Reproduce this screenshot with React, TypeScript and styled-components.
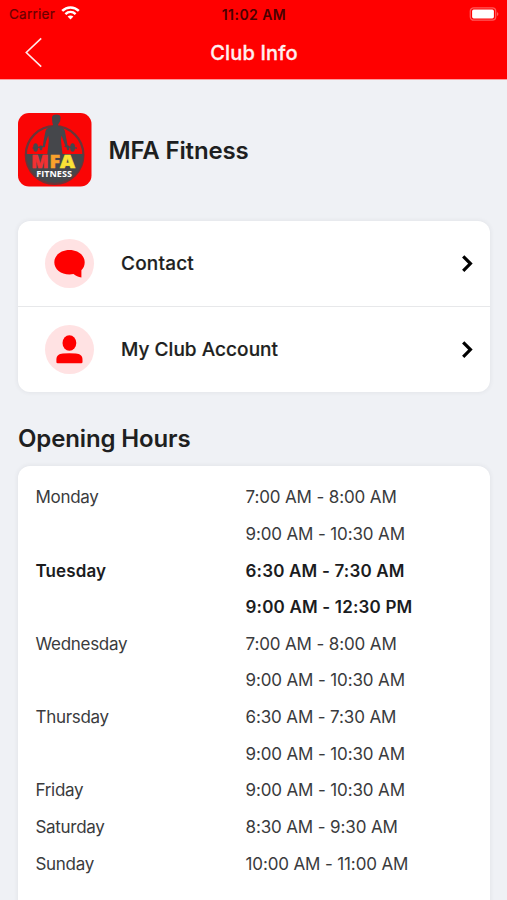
import React from "react";
import styled, { createGlobalStyle } from "styled-components";

const GlobalStyle = createGlobalStyle`
  * { box-sizing: border-box; }
  html, body { margin: 0; background: #eff1f5; }
  body {
    font-family: Inter, "Liberation Sans", sans-serif;
    color: #1e1f21;
    overflow: hidden;
  }
`;

const Screen = styled.div`
  width: 507px;
  height: 900px;
  overflow: hidden;
  display: flex;
  flex-direction: column;
  background: #eff1f5;
`;

const Header = styled.header`
  flex: none;
  height: 80px;
  background: #ff0000;
  border-bottom: 1px solid #fb9c9e;
`;

const StatusBar = styled.div`
  height: 27px;
  padding: 0 8px 0 9px;
  display: grid;
  grid-template-columns: 1fr auto 1fr;
  align-items: center;
`;

const Carrier = styled.div`
  display: flex;
  align-items: center;
  gap: 6px;
  font-size: 13.5px;
  line-height: 27px;
  letter-spacing: 0.25px;
  padding-top: 1px;
  color: #6a0000;
  -webkit-text-stroke: 0.2px #6a0000;

  svg {
    margin-top: -3px;
  }
`;

const Clock = styled.div`
  font-size: 14px;
  font-weight: 600;
  line-height: 27px;
  letter-spacing: 0.45px;
  color: #4a0000;
`;

const BatterySlot = styled.div`
  display: flex;
  justify-content: flex-end;
`;

const NavBar = styled.div`
  height: 52px;
  display: grid;
  grid-template-columns: 60px 1fr 60px;
  align-items: center;
`;

const BackButton = styled.button`
  border: 0;
  padding: 0 0 0 24px;
  background: none;
  display: flex;
`;

const NavTitle = styled.h1`
  margin: 0;
  padding-left: 1px;
  text-align: center;
  font-size: 20px;
  font-weight: 500;
  line-height: 50px;
  letter-spacing: 0.15px;
  color: #fff0f0;
  -webkit-text-stroke: 0.3px #fff0f0;
`;

const Content = styled.main`
  padding: 33px 17px 0 18px;
`;

const Club = styled.section`
  display: flex;
  align-items: center;
  gap: 16.5px;
  height: 74px;
`;

const ClubName = styled.h2`
  margin: 0;
  padding-top: 2px;
  font-size: 24px;
  font-weight: 600;
  line-height: 30px;
  letter-spacing: -0.15px;
`;

const Card = styled.section`
  background: #fff;
  border-radius: 12px;
  box-shadow: 0 0 5px rgba(50, 55, 65, 0.09);
`;

const Menu = styled(Card)`
  margin-top: 34px;
  height: 171px;
`;

const MenuRow = styled.a`
  display: flex;
  align-items: center;
  height: 85px;
  padding: 0 17px 0 27px;
  & + & {
    height: 86px;
    border-top: 1px solid #e7e8ea;
  }
`;

const IconDisc = styled.span`
  width: 49px;
  height: 49px;
  border-radius: 50%;
  background: #ffe2e3;
`;

const MenuLabel = styled.span<{ $tracking: number }>`
  flex: 1;
  margin-left: 27px;
  font-size: 19px;
  font-weight: 500;
  letter-spacing: ${(p) => p.$tracking}px;
  -webkit-text-stroke: 0.2px #1e1f21;
`;

const SectionTitle = styled.h2`
  margin: 31px 0 0;
  height: 43px;
  padding-top: 1px;
  font-size: 24px;
  font-weight: 600;
  line-height: 30px;
  letter-spacing: -0.13px;
`;

const Hours = styled(Card)`
  height: 480px;
  padding: 13.3px 18px 0 17.5px;
`;

const HoursRow = styled.div<{ $today: boolean }>`
  display: grid;
  grid-template-columns: 210px 1fr;
  font-size: 17px;
  line-height: 36.63px;
  font-weight: ${(p) => (p.$today ? 600 : 400)};
  color: ${(p) => (p.$today ? "#1b1c1e" : "#3a3b3d")};
`;

const Day = styled.span<{ $today: boolean }>`
  letter-spacing: ${(p) => (p.$today ? 0.1 : -0.3)}px;
`;

const Slots = styled.span<{ $today: boolean }>`
  display: flex;
  flex-direction: column;
  letter-spacing: ${(p) => (p.$today ? 0.18 : -0.13)}px;
`;

const Slot = styled.span`
  white-space: nowrap;
`;

const hours = [
  { day: "Monday", slots: ["7:00 AM - 8:00 AM", "9:00 AM - 10:30 AM"] },
  { day: "Tuesday", slots: ["6:30 AM - 7:30 AM", "9:00 AM - 12:30 PM"], today: true },
  { day: "Wednesday", slots: ["7:00 AM - 8:00 AM", "9:00 AM - 10:30 AM"] },
  { day: "Thursday", slots: ["6:30 AM - 7:30 AM", "9:00 AM - 10:30 AM"] },
  { day: "Friday", slots: ["9:00 AM - 10:30 AM"] },
  { day: "Saturday", slots: ["8:30 AM - 9:30 AM"] },
  { day: "Sunday", slots: ["10:00 AM - 11:00 AM"] },
];

const WifiIcon = () => (
  <svg width="19" height="14" viewBox="0 0 19 14">
    <g fill="none" stroke="#fff" strokeWidth="2.5">
      <path d="M1.2 4.9C6 .2 13 .2 17.8 4.9" />
      <path d="M4.4 8.1c3-2.8 7.2-2.8 10.2 0" />
    </g>
    <path d="M6.6 10.6c1.7-1.5 4.1-1.5 5.8 0L9.5 13.6z" fill="#fff" />
  </svg>
);

const BatteryIcon = () => (
  <svg width="30" height="14" viewBox="0 0 30 14">
    <rect x="1.3" y=".8" width="25.4" height="12.4" rx="3.4" fill="none" stroke="#ff5a5a" strokeWidth="1.3" />
    <rect x="3.1" y="2.6" width="21.8" height="8.8" rx="1.6" fill="#fff" />
    <path d="M28 4.9v4.2c1.9-.8 1.9-3.4 0-4.2z" fill="#ff5a5a" />
  </svg>
);

const BackIcon = () => (
  <svg width="20" height="32" viewBox="0 0 20 32">
    <path d="M17.2 1.3 2.3 15.5l14.9 14.2" fill="none" stroke="#ffe9e9" strokeWidth="1.6" />
  </svg>
);

const ChevronIcon = () => (
  <svg width="12" height="18" viewBox="0 0 12 18">
    <path d="M2.2 1.4 9.4 8.6l-7.2 7.2" fill="none" stroke="#000" strokeWidth="3.2" />
  </svg>
);

const ChatIcon = () => (
  <svg width="49" height="49" viewBox="0 0 49 49">
    <path
      d="M24.5 11.1c-8.4 0-15.2 5.2-15.2 12.1s6.5 12.2 15.2 12.2c1.4 0 2.7-.1 4-.4 2.3 1.7 4.8 3 7.9 3.4v-7.2c2.2-2.1 3.3-4.8 3.3-8 0-6.9-6.8-12.1-15.2-12.1z"
      fill="#ff0000"
    />
  </svg>
);

const PersonIcon = () => (
  <svg width="49" height="49" viewBox="0 0 49 49">
    <ellipse cx="24.4" cy="18" rx="6.9" ry="7.8" fill="#ff0000" />
    <path d="M11.4 35c0-4.6 2.4-5.8 6.6-6.4q6.4-.8 12.8 0c4.2.6 6.7 1.8 6.7 6.4v1.9q0 1.3-1.3 1.3H12.7q-1.3 0-1.3-1.3z" fill="#ff0000" />
  </svg>
);

const ClubLogo = () => (
  <svg width="74" height="74" viewBox="0 0 74 74">
    <rect width="73.5" height="73.5" rx="11" fill="#fa0505" />
    <circle cx="36.6" cy="42" r="28.8" fill="none" stroke="#6a3538" strokeWidth="2.2" />
    <path d="M8 41h57.4c0 16-12.8 29-28.7 29S8 57 8 41z" fill="#45474b" />
    <g fill="#45474b">
      <path d="M34 4.6C34 2.6 35.8 1.6 38.3 1.6s4.3 1.2 4.3 3.2l-.5 3.4-2 3.3v1.6l4.4 1.8c2 .9 2.4 2.6 2.7 4.8l1.3 7 1.2 6.3-1.9 1.2-2.2-6-2.1-5.7-.5 5 1.6 14.5H29.2l1.6-14.5-.5-5-2.1 5.7-1.5 6-2-.8 1.1-6.7 1.4-7c.4-2.2.8-3.9 2.8-4.8l4.9-1.8v-1.6l-.6-2.3z" />
      <ellipse cx="17.6" cy="34.5" rx="2.4" ry="4.2" />
      <ellipse cx="54.6" cy="34.5" rx="2.4" ry="4.2" />
      <ellipse cx="23" cy="34.8" rx="1.5" ry="2.6" />
      <ellipse cx="50" cy="34.8" rx="1.5" ry="2.6" />
    </g>
    <path d="M14.5 35.2 27 33.4M46.5 33.4l12.5 1.8" stroke="#45474b" strokeWidth="1.2" />
    <g fontFamily="Open Sans, sans-serif" fontWeight="800" fontSize="17.4" strokeWidth=".5">
      <text x="13.2" y="55" fill="#f23032" stroke="#f23032" textLength="17.4" lengthAdjust="spacingAndGlyphs">M</text>
      <text x="31.5" y="55" fill="#f9a12c" stroke="#f9a12c" textLength="10.6" lengthAdjust="spacingAndGlyphs">F</text>
      <text x="42" y="55" fill="#fae336" stroke="#fae336" textLength="15" lengthAdjust="spacingAndGlyphs">A</text>
    </g>
    <text x="18.3" y="64.4" fill="#fff" fontFamily="Open Sans, sans-serif" fontWeight="700" fontSize="8.6" textLength="35.6" lengthAdjust="spacingAndGlyphs">FITNESS</text>
  </svg>
);

export default function App() {
  return (
    <Screen>
      <GlobalStyle />
      <Header>
        <StatusBar>
          <Carrier>
            Carrier
            <WifiIcon />
          </Carrier>
          <Clock>11:02 AM</Clock>
          <BatterySlot>
            <BatteryIcon />
          </BatterySlot>
        </StatusBar>
        <NavBar>
          <BackButton aria-label="Back">
            <BackIcon />
          </BackButton>
          <NavTitle>Club Info</NavTitle>
        </NavBar>
      </Header>
      <Content>
        <Club>
          <ClubLogo />
          <ClubName>MFA Fitness</ClubName>
        </Club>
        <Menu>
          <MenuRow>
            <IconDisc>
              <ChatIcon />
            </IconDisc>
            <MenuLabel $tracking={0.2}>Contact</MenuLabel>
            <ChevronIcon />
          </MenuRow>
          <MenuRow>
            <IconDisc>
              <PersonIcon />
            </IconDisc>
            <MenuLabel $tracking={0.04}>My Club Account</MenuLabel>
            <ChevronIcon />
          </MenuRow>
        </Menu>
        <SectionTitle>Opening Hours</SectionTitle>
        <Hours>
          {hours.map(({ day, slots, today = false }) => (
            <HoursRow key={day} $today={today}>
              <Day $today={today}>{day}</Day>
              <Slots $today={today}>
                {slots.map((slot) => (
                  <Slot key={slot}>{slot}</Slot>
                ))}
              </Slots>
            </HoursRow>
          ))}
        </Hours>
      </Content>
    </Screen>
  );
}
